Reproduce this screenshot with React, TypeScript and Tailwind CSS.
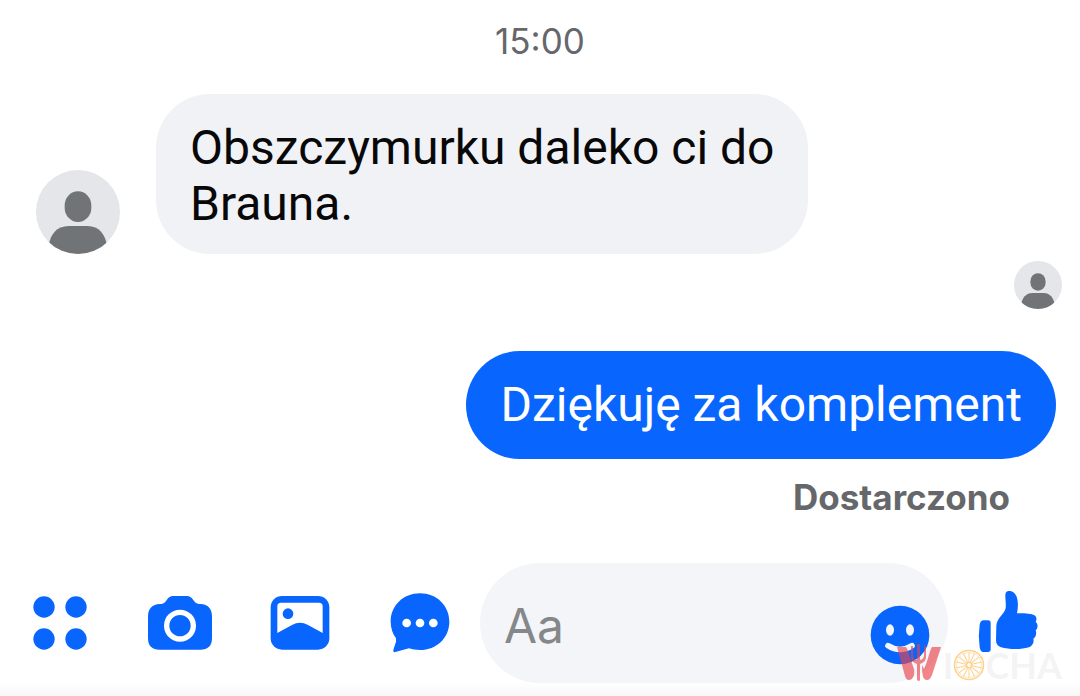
import type { ReactNode } from "react";

function Avatar({ className }: { className: string }) {
  return (
    <svg viewBox="0 0 252 252" className={`shrink-0 overflow-hidden rounded-full bg-[#e4e6ea] ${className}`} role="img" aria-label="Avatar">
      <rect x="86" y="64" width="80" height="92" rx="40" ry="43" fill="#707477" />
      <path d="M38 228C42 194 62 168 98 168H154C190 168 208 194 213 228V252H38Z" fill="#707477" />
    </svg>
  );
}

const BLUE = "#0866ff";

function DotsIcon() {
  return (
    <svg viewBox="0 0 162 162" className="h-[54px] w-[54px]" fill={BLUE}>
      <circle cx="33" cy="33" r="32" />
      <circle cx="129" cy="33" r="32" />
      <circle cx="33" cy="129" r="32" />
      <circle cx="129" cy="129" r="32" />
    </svg>
  );
}

function CameraIcon() {
  return (
    <svg viewBox="0 0 192 162" className="h-[54px] w-16">
      <path
        d="M36 24C60 24 52 0 78 0H114C140 0 132 24 158 24C180 25 192 39 192 60V126C192 150 180 161 157 161H35C12 161 0 150 0 126V60C0 39 12 25 36 24Z"
        fill={BLUE}
      />
      <circle cx="96" cy="89" r="40" fill="none" stroke="#fff" strokeWidth="16" />
    </svg>
  );
}

function ImageIcon() {
  return (
    <svg viewBox="0 0 180 162" className="h-[54px] w-[60px]">
      <rect x="2" y="0" width="176" height="161" rx="34" fill={BLUE} />
      <path
        d="M33 20H147Q158 20 158 31V111L114 87Q90 74 66 87L22 111V31Q22 20 33 20Z"
        fill="#fff"
      />
      <circle cx="54" cy="53" r="16" fill={BLUE} />
    </svg>
  );
}

function ChatIcon() {
  return (
    <svg viewBox="0 0 180 180" className="h-[60px] w-[60px]">
      <path
        d="M90 1C140 1 178 38 178 86S140 171 90 171C78 171 68 169 57 166L16 177Q8 179 10 171L18 146V136C8 122 2 105 2 86C2 38 40 1 90 1Z"
        fill={BLUE}
      />
      <g fill="#fff">
        <circle cx="50" cy="90" r="13" />
        <circle cx="90" cy="90" r="13" />
        <circle cx="130" cy="90" r="13" />
      </g>
    </svg>
  );
}

function SmileyIcon() {
  return (
    <svg viewBox="0 0 180 180" className="h-[60px] w-[60px]">
      <circle cx="90" cy="90" r="88" fill={BLUE} />
      <g fill="#f3f5f9">
        <ellipse cx="60" cy="75" rx="12" ry="17" />
        <ellipse cx="120" cy="75" rx="12" ry="17" />
      </g>
      <path d="M54 122Q90 145 126 122" fill="none" stroke="#f3f5f9" strokeWidth="17" strokeLinecap="round" />
    </svg>
  );
}

function LikeIcon() {
  return (
    <svg viewBox="0 0 180 198" className="h-[66px] w-[60px]" fill={BLUE}>
      <path d="M17 91H30Q38 91 38 99V177Q38 186 30 186H16Q7 186 5 172Q0 138 5 104Q7 91 17 91Z" />
      <path d="M55 108C56 84 80 72 83 54C85 38 80 18 83 9C87 1 98 2 106 7C121 17 122 46 117 70C138 69 156 71 166 74C177 78 177 89 173 95C181 102 180 115 173 121C177 130 173 142 166 146C169 157 164 167 153 172C126 180 91 178 69 172C58 168 54 161 54 151Z" />
    </svg>
  );
}

const spokes = Array.from({ length: 14 }, (_, i) => (i * 360) / 14);

function Watermark() {
  return (
    <div className="pointer-events-none absolute right-[18px] bottom-[14px] flex h-[38px] items-center font-['Lato'] text-4xl leading-none font-bold text-[#d8d8d8]/30">
      <svg viewBox="0 0 45 38" className="h-[38px] w-[45px]" role="img" aria-label="W">
        <g fill="#e8434b" fillOpacity="0.65">
          <path d="M0 3H9C11 5 14 17 17 25C18 31 16 36 12 36Q9 36 8 32Z" />
          <path d="M44 3H35C33 5 31 17 27 25L25 21C25 31 26 36 30 36Q33 36 35 31Z" />
          <path d="M14 2H16V12Q17 16 20 16V0H23V16Q26 16 27 12V2H29V13Q29 18 23 20V36Q22 38 20 36V20Q14 18 14 13Z" />
        </g>
      </svg>
      <span className="mt-1 ml-px">I</span>
      <svg viewBox="0 0 32 32" className="mt-1 h-8 w-8" fill="none" stroke="#fbc978" strokeOpacity="0.85">
        <circle cx="16" cy="16" r="14.5" strokeWidth="1.6" />
        <circle cx="16" cy="16" r="12.5" strokeWidth="0.5" />
        <circle cx="16" cy="16" r="2.6" strokeWidth="1.4" />
        {spokes.map((a) => (
          <path key={a} d="M16 13V3" transform={`rotate(${a} 16 16)`} strokeWidth="1" />
        ))}
      </svg>
      <span className="mt-1">CHA</span>
    </div>
  );
}

function ToolButton({ label, children }: { label: string; children: ReactNode }) {
  return (
    <button type="button" aria-label={label} className="flex w-[120px] shrink-0 items-center justify-center">
      {children}
    </button>
  );
}

export default function App() {
  return (
    <main className="flex min-h-screen flex-col bg-white font-['Inter',sans-serif]">
      <section className="flex flex-col pt-5">
        <time className="self-center text-[35px] leading-[42px] text-[#65676b]">15:00</time>

        <div className="mt-8 flex items-end gap-9 pl-9">
          <Avatar className="h-21 w-21" />
          <p className="max-w-[652px] rounded-[54px] bg-[#f0f2f6] pt-[26px] pr-8 pb-[22px] pl-[34px] font-['Roboto',sans-serif] text-5xl leading-14 text-[#080809]">
            Obszczymurku daleko ci do Brauna.
          </p>
        </div>

        <Avatar className="mt-[7px] mr-[18px] h-12 w-12 self-end" />

        <p className="mt-[42px] mr-6 self-end rounded-full bg-[#0866ff] px-[34px] py-[26px] font-['Roboto',sans-serif] text-5xl leading-14 text-white">
          Dziękuję za komplement
        </p>
        <p className="mt-[18px] mr-[70px] self-end text-[35px] leading-10 font-bold text-[#65676b]">Dostarczono</p>
      </section>

      <form className="relative mt-auto flex items-stretch bg-linear-to-t from-[#f7f7f7] to-white to-10% pr-3 pb-[13px]">
        <ToolButton label="Więcej"><DotsIcon /></ToolButton>
        <ToolButton label="Aparat"><CameraIcon /></ToolButton>
        <ToolButton label="Galeria"><ImageIcon /></ToolButton>
        <ToolButton label="Czat"><ChatIcon /></ToolButton>
        <div className="flex h-[120px] min-w-0 flex-1 items-end rounded-full bg-[#f3f5f9] pr-[18px] pl-6">
          <input
            type="text"
            aria-label="Wiadomość"
            placeholder="Aa"
            className="h-full min-w-0 flex-1 bg-transparent pt-1 text-5xl outline-none placeholder:text-[#858789]"
          />
          <button type="button" aria-label="Emoji" className="mb-[18px] shrink-0">
            <SmileyIcon />
          </button>
        </div>
        <ToolButton label="Lubię to"><LikeIcon /></ToolButton>
        <Watermark />
      </form>
    </main>
  );
}
